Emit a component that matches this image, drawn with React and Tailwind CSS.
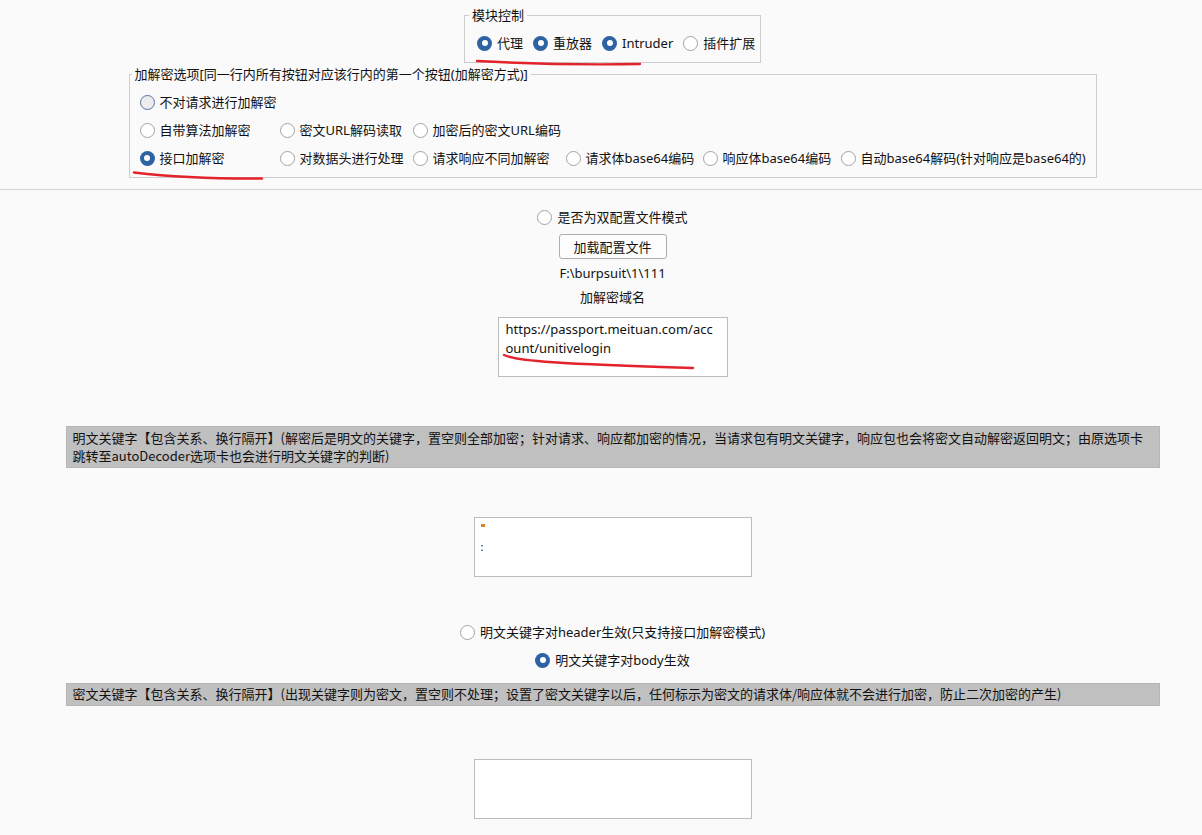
import React from "react";

function Radio({ checked, focus, label, className = "" }) {
  let dot;
  if (checked) {
    dot = (
      <span className="w-[15px] h-[15px] shrink-0 rounded-full bg-[#2d62a3] flex items-center justify-center">
        <span className="w-[6px] h-[6px] rounded-full bg-white" />
      </span>
    );
  } else if (focus) {
    dot = <span className="w-[15px] h-[15px] shrink-0 rounded-full border border-[#56759c] bg-[#ededed]" />;
  } else {
    dot = <span className="w-[15px] h-[15px] shrink-0 rounded-full border border-[#a3a3a3] bg-white" />;
  }
  return (
    <div className={"flex items-center h-[20px] gap-[5px] " + className}>
      {dot}
      <span className="text-[13px] leading-[20px] whitespace-nowrap">{label}</span>
    </div>
  );
}

export default function App() {
  return (
    <div className="relative w-[1202px] h-[835px] overflow-hidden bg-[#fafafa] text-[#111] font-['Noto_Sans','Noto_Sans_CJK_SC',sans-serif]">
      <div className="w-[1225px] flex flex-col items-center">
        {/* 模块控制 */}
        <fieldset className="mt-[7px] w-[297px] border border-[#cdcdcd] p-0 m-0">
          <legend className="ml-[4px] px-[3px] text-[13px] leading-[16px]">模块控制</legend>
          <div className="flex items-center gap-[10px] pl-[12px] pt-[10px] pb-[9px]">
            <Radio checked label="代理" />
            <Radio checked label="重放器" />
            <Radio checked label="Intruder" className="gap-[3px]" />
            <Radio label="插件扩展" />
          </div>
        </fieldset>

        {/* 加解密选项 */}
        <fieldset className="mt-[3px] w-[968px] border border-[#cdcdcd] p-0 m-0">
          <legend className="ml-[2px] px-[3px] text-[13px] leading-[16px]">
            加解密选项[同一行内所有按钮对应该行内的第一个按钮(加解密方式)]
          </legend>
          <div className="grid grid-cols-[140px_133px_153px_137px_138px_auto] gap-y-[8px] pl-[10px] pt-[10px] pb-[9px]">
            <Radio focus label="不对请求进行加解密" className="col-span-6" />
            <Radio label="自带算法加解密" />
            <Radio label="密文URL解码读取" />
            <Radio label="加密后的密文URL编码" className="col-span-4" />
            <Radio checked label="接口加解密" />
            <Radio label="对数据头进行处理" />
            <Radio label="请求响应不同加解密" />
            <Radio label="请求体base64编码" />
            <Radio label="响应体base64编码" />
            <Radio label="自动base64解码(针对响应是base64的)" />
          </div>
        </fieldset>

        <div className="mt-[11px] w-full h-px bg-[#d6d6d6]" />

        <Radio label="是否为双配置文件模式" className="mt-[17px]" />

        <button className="mt-[7px] w-[108px] h-[25px] border border-[#adadad] rounded-[3px] bg-[#fdfdfd] text-[13px] leading-[20px]">
          加载配置文件
        </button>

        <div className="mt-[4px] text-[13px] leading-[20px]">F:\burpsuit\1\111</div>
        <div className="mt-[4px] text-[13px] leading-[20px]">加解密域名</div>

        <div className="mt-[10px] w-[230px] h-[60px] border border-[#bcbcbc] bg-white pl-[7px] pt-[2px] text-[13px] leading-[19px]">
          https://passport.meituan.com/acc
          <br />
          ount/unitivelogin
        </div>

        <div className="mt-[49px] w-[1094px] h-[42px] border border-[#b6b6b6] bg-[#c0c0c0] pl-[6px] pt-[2px] text-[13px] leading-[18px] font-['Noto_Sans_CJK_SC',sans-serif] whitespace-nowrap">
          明文关键字【包含关系、换行隔开】(解密后是明文的关键字，置空则全部加密；针对请求、响应都加密的情况，当请求包有明文关键字，响应包也会将密文自动解密返回明文；由原选项卡
          <br />
          跳转至autoDecoder选项卡也会进行明文关键字的判断)
        </div>

        <div className="mt-[49px] w-[278px] h-[60px] border border-[#bcbcbc] bg-white pl-[6px] pt-[6px]">
          <div className="w-[4px] h-[3px] bg-[#d9822b]" />
          <div className="mt-[13px] text-[11px] leading-[14px]">:</div>
        </div>

        <Radio label="明文关键字对header生效(只支持接口加解密模式)" className="mt-[45px]" />
        <Radio checked label="明文关键字对body生效" className="mt-[8px]" />

        <div className="mt-[13px] w-[1094px] h-[23px] border border-[#b6b6b6] bg-[#c0c0c0] pl-[6px] pt-[1px] text-[13px] leading-[18px] font-['Noto_Sans_CJK_SC',sans-serif] whitespace-nowrap">
          密文关键字【包含关系、换行隔开】(出现关键字则为密文，置空则不处理；设置了密文关键字以后，任何标示为密文的请求体/响应体就不会进行加密，防止二次加密的产生)
        </div>

        <div className="mt-[53px] w-[278px] h-[60px] border border-[#bcbcbc] bg-white" />
      </div>

      <svg className="absolute left-0 top-0 pointer-events-none" width="1202" height="835">
        <g fill="none" stroke="#e3222c" strokeWidth="2.4" strokeLinecap="round">
          <path d="M477 61 Q 560 65.5 640 64" />
          <path d="M134 172.5 Q 190 179 262 178.5" />
          <path d="M504 355 C 516 361, 560 364, 693 368" />
        </g>
      </svg>
    </div>
  );
}
